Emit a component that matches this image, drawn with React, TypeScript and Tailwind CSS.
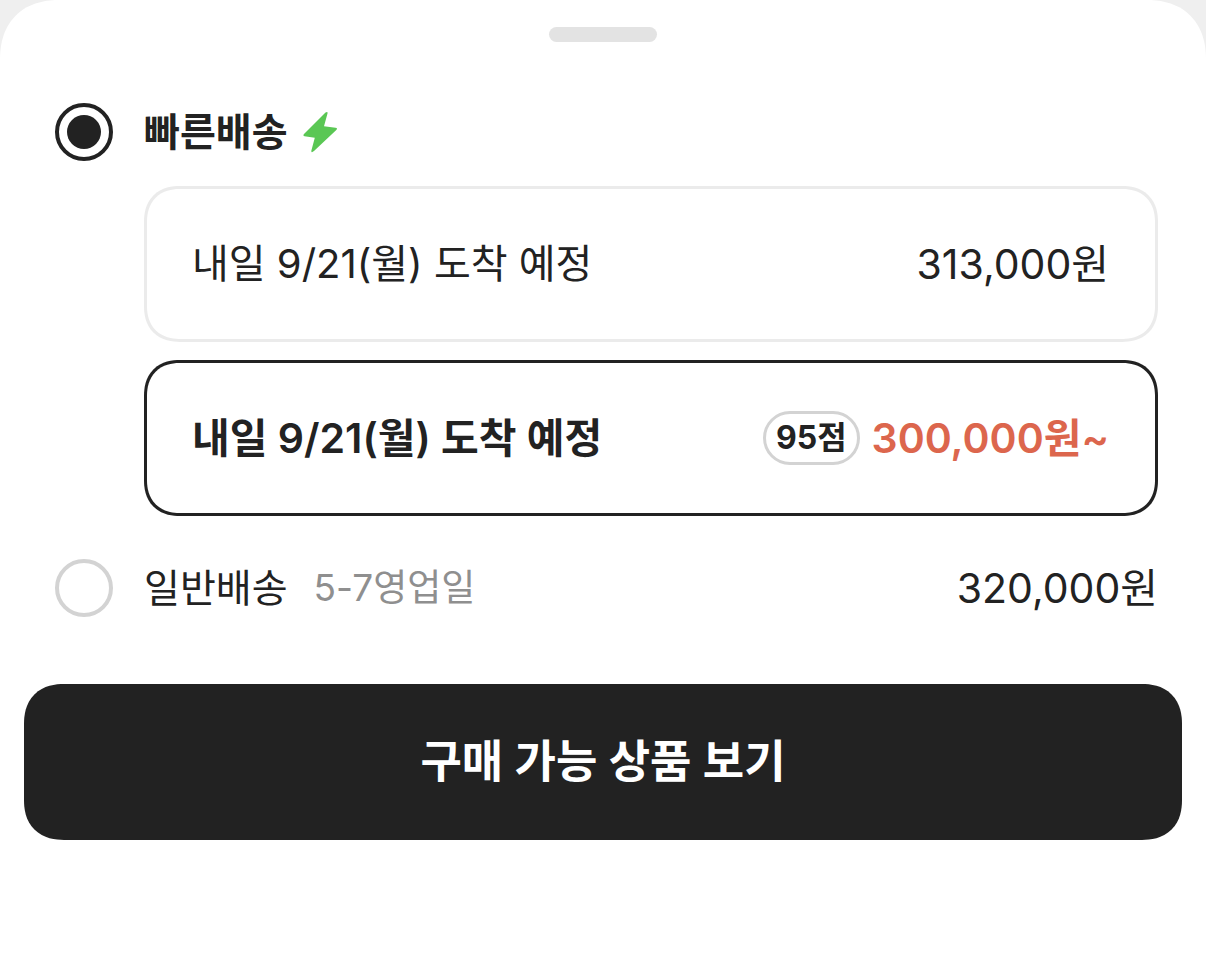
import { useState } from "react";

const FONT = "font-[Inter,'Noto_Sans_CJK_KR',sans-serif]";

interface RadioProps {
  id: string;
  checked: boolean;
  onChange: () => void;
}

const Radio: React.FC<RadioProps> = ({ id, checked, onChange }) => {
  return (
    <input
      id={id}
      type="radio"
      name="delivery"
      checked={checked}
      onChange={onChange}
      className="size-[58px] shrink-0 appearance-none rounded-full border-4 border-[#d3d3d3] bg-white bg-clip-content p-2 checked:border-[#222] checked:bg-[#222]"
    />
  );
};

const Bolt = () => (
  <svg viewBox="0 0 38 42" className="h-[42px] w-[38px]" aria-hidden="true">
    <path
      d="M25.5 1.500 Q28 0 27.500 2.500 L24 15.300 L35.500 16.800 Q38 17.200 36.300 19 L14 40 Q11 42.500 11.400 39.500 L14.800 26.800 L4.500 25.300 Q2.500 24.800 4 23Z"
      fill="#5ac754"
    />
  </svg>
);

const App = () => {
  const [method, setMethod] = useState("fast");
  const [option, setOption] = useState(1);

  const optionClass = (selected: boolean) =>
    `flex h-[156px] w-full items-center justify-between rounded-[36px] [corner-shape:superellipse(1.2)] border-[3px] pl-[45px] pr-[46px] ${
      selected
        ? "border-[#222] text-[41px] font-semibold"
        : "border-[#ebebeb]"
    }`;

  return (
    <div
      className={`min-h-screen bg-[#efefef] text-[40px] leading-[50px] text-[#222] ${FONT}`}
    >
      <main className="min-h-screen rounded-t-[60px] [corner-shape:superellipse(1.2)] bg-white px-6 pt-[27px]">
        <div className="mx-auto h-[15px] w-[108px] rounded-full bg-[#e3e3e3]" />

        <div className="mt-[61px] pl-[31px] pr-6">
          <div className="flex items-center gap-[31px]">
            <Radio
              id="fast"
              checked={method === "fast"}
              onChange={() => setMethod("fast")}
            />
            <label
              htmlFor="fast"
              className="flex items-center gap-3 text-[39px] font-semibold"
            >
              빠른배송
              <Bolt />
            </label>
          </div>

          <div className="mt-[25px] flex flex-col gap-[18px] pl-[89px]">
            <button
              type="button"
              onClick={() => setOption(0)}
              className={optionClass(option === 0)}
            >
              <span>내일 9/21(월) 도착 예정</span>
              <span className="text-[41px]">313,000원</span>
            </button>
            <button
              type="button"
              onClick={() => setOption(1)}
              className={optionClass(option === 1)}
            >
              <span>내일 9/21(월) 도착 예정</span>
              <span className="flex items-center gap-3">
                <span className="flex h-[54px] items-center rounded-full border-[3px] border-[#d3d3d3] px-[10px] text-[32px] font-bold">
                  95점
                </span>
                <span className="text-[#dc664d]">300,000원~</span>
              </span>
            </button>
          </div>

          <div className="mt-[43px] flex items-center gap-[31px]">
            <Radio
              id="normal"
              checked={method === "normal"}
              onChange={() => setMethod("normal")}
            />
            <label htmlFor="normal" className="flex flex-1 items-center">
              <span className="text-[39px]">일반배송</span>
              <span className="ml-[26px] text-[37px] text-[#8f8f8f]">
                5-7영업일
              </span>
              <span className="ml-auto text-[41px]">320,000원</span>
            </label>
          </div>
        </div>

        <button
          type="button"
          className="mt-[67px] h-[156px] w-full rounded-[40px] [corner-shape:superellipse(1.2)] bg-[#222] text-[45px] font-semibold text-white"
        >
          구매 가능 상품 보기
        </button>
      </main>
    </div>
  );
};

export default App;
